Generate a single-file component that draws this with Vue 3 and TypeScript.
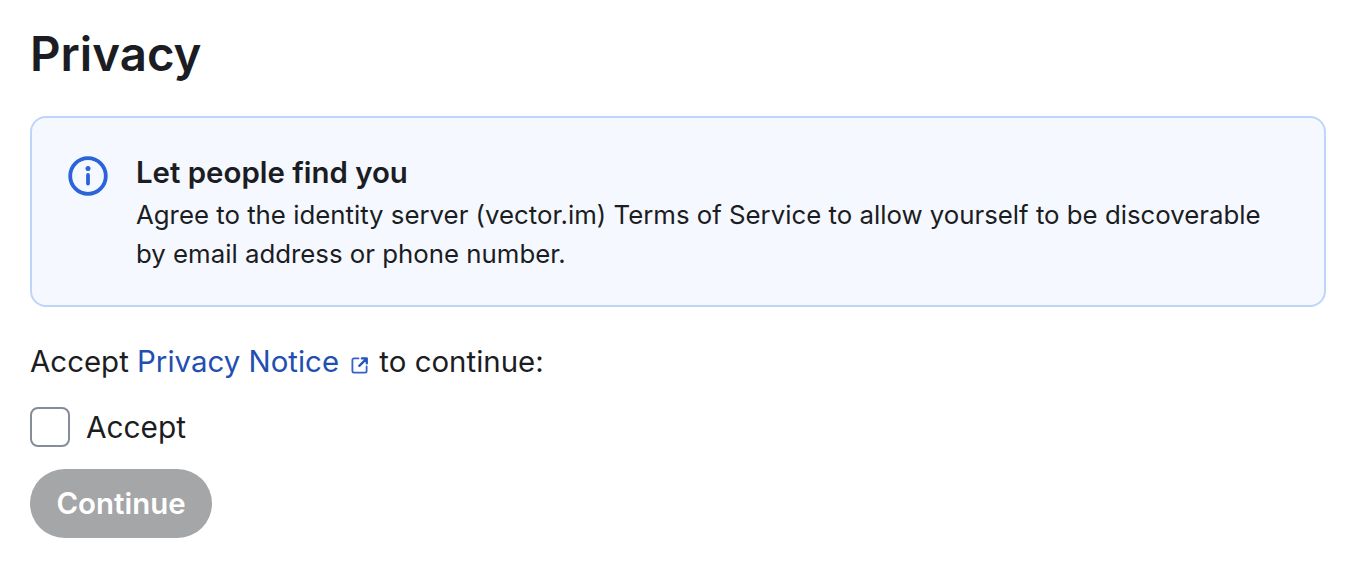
<script setup lang="ts">
const title = 'Privacy'
</script>

<template>
  <main class="page">
    <h1 class="title">{{ title }}</h1>
    <section class="notice">
      <svg class="info" viewBox="0 0 40 40" width="40" height="40" aria-hidden="true">
        <circle cx="20" cy="20" r="17.8" fill="none" stroke="#2b63d9" stroke-width="3.8" />
        <circle cx="20" cy="12.6" r="2.5" fill="#2b63d9" />
        <rect x="18.1" y="17" width="3.8" height="12.5" rx="1.9" fill="#2b63d9" />
      </svg>
      <div class="notice-body">
        <div class="notice-title">Let people find you</div>
        <p class="notice-text">Agree to the identity server (vector.im) Terms of Service to allow yourself to be discoverable by email address or phone number.</p>
      </div>
    </section>
    <p class="terms">
      Accept <a class="link" href="#">Privacy Notice<svg class="ext" viewBox="0 0 18 18" width="18" height="18" aria-hidden="true"><path d="M7.5 2.4H3a1.6 1.6 0 0 0-1.6 1.6v11A1.6 1.6 0 0 0 3 16.600h11a1.600 1.600 0 0 0 1.600-1.600v-4.500" fill="none" stroke="#3563c9" stroke-width="1.800" stroke-linecap="round" stroke-linejoin="round" /><path d="M10.800 2.400h5v5M15.600 2.600 8.300 9.900" fill="none" stroke="#2554bb" stroke-width="2.200" stroke-linecap="round" stroke-linejoin="round" /></svg></a> to continue:
    </p>
    <label class="check">
      <span class="box"></span>
      <span>Accept</span>
    </label>
    <button class="continue" type="button" disabled>Continue</button>
  </main>
</template>

<style scoped>
.page {
  box-sizing: border-box;
  width: 1368px;
  height: 562px;
  padding: 24px 42px 0 30px;
  font-family: Inter, "Liberation Sans", sans-serif;
  color: #1b1d22;
  background: #fff;
}
.title {
  margin: 0 0 32px;
  font-size: 47.4px;
  line-height: 60px;
  font-weight: 600;
}
.notice {
  box-sizing: border-box;
  display: flex;
  gap: 28px;
  height: 191px;
  padding: 36px 36px 0;
  background: #f5f8ff;
  border: 2px solid #bed5fa;
  border-radius: 16px;
}
.info {
  flex: none;
  margin-top: 2px;
}
.notice-title {
  font-size: 29.4px;
  line-height: 38px;
  font-weight: 600;
}
.notice-text {
  margin: 3px 0 0;
  font-size: 25.8px;
  line-height: 39px;
}
.terms {
  margin: 34px 0 0;
  font-size: 29.45px;
  line-height: 40px;
}
.link {
  color: #1f4fb0;
  text-decoration: none;
}
.ext {
  margin-left: 12px;
  margin-right: 2px;
  vertical-align: -2px;
}
.check {
  display: flex;
  align-items: center;
  gap: 16px;
  margin-top: 26px;
  font-size: 29.8px;
  line-height: 40px;
}
.box {
  box-sizing: border-box;
  width: 40px;
  height: 40px;
  border: 2px solid #868c98;
  border-radius: 8px;
}
.continue {
  display: block;
  width: 182px;
  height: 69px;
  margin-top: 22px;
  padding: 0 0 2px;
  border: 0;
  border-radius: 35px;
  background: #a5a6a8;
  color: #fff;
  font-family: inherit;
  font-size: 29.45px;
  font-weight: 600;
}
</style>
